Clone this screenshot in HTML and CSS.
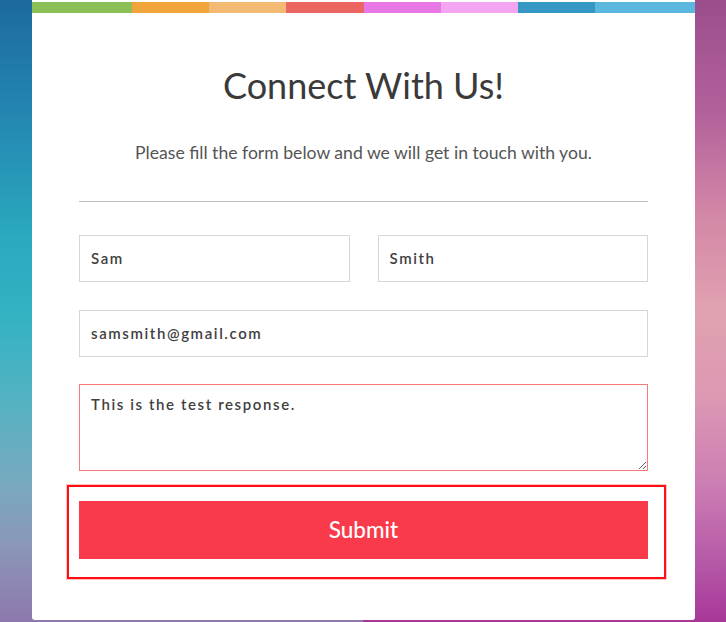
FILE: index.html
```html
<!DOCTYPE html>
<html lang="en">
<head>
<meta charset="utf-8">
<title>Connect With Us!</title>
<link rel="stylesheet" href="styles.css">
</head>
<body>
<main class="card">
  <div class="strip">
    <span class="seg seg-green"></span>
    <span class="seg seg-orange"></span>
    <span class="seg seg-sand"></span>
    <span class="seg seg-red"></span>
    <span class="seg seg-pink"></span>
    <span class="seg seg-rose"></span>
    <span class="seg seg-blue"></span>
    <span class="seg seg-sky"></span>
  </div>
  <div class="content">
    <h1 class="title">Connect With Us!</h1>
    <p class="lead">Please fill the form below and we will get in touch with you.</p>
    <hr class="divider">
    <form class="form">
      <div class="row">
        <input class="field" type="text" value="Sam">
        <input class="field" type="text" value="Smith">
      </div>
      <input class="field field-email" type="email" value="samsmith@gmail.com">
      <textarea class="field area">This is the test response.</textarea>
      <div class="highlight">
        <button class="submit" type="button">Submit</button>
      </div>
    </form>
  </div>
</main>
</body>
</html>
```

FILE: styles.css
```css
html, body {
  height: 100%;
}

body {
  margin: 0;
  overflow: hidden;
  font-family: Lato, "Open Sans", sans-serif;
  background:
    linear-gradient(to bottom, #9b4d8c 0%, #b3619b 18%, #d488a7 35%, #e0a2b0 50%, #dc98b3 64%, #cc7db3 78%, #b65aa8 90%, #a83798 100%) right top / 50% 100% no-repeat,
    linear-gradient(to bottom, #1d6a9e 0%, #2489b2 20%, #2aa9bf 38%, #36b3c3 52%, #55b2c2 65%, #79a9bf 78%, #8b96b8 88%, #8d78ad 100%) left top / 50% 100% no-repeat;
}

.card {
  width: 663px;
  margin-left: 32px;
  padding: 2px 0 41px;
  background: #ffffff;
  border-radius: 0 0 3px 3px;
}

.strip {
  display: flex;
  height: 11px;
}

.seg {
  flex: 1;
}

.seg-green { flex: 0 0 100px; background: #8bc057; }
.seg-orange { background: #f1a43a; }
.seg-sand { background: #f2ba72; }
.seg-red { background: #eb6661; }
.seg-pink { background: #e878e6; }
.seg-rose { background: #f4a5f2; }
.seg-blue { background: #3598c4; }
.seg-sky { flex: 0 0 100px; background: #5cb7df; }

.content {
  padding: 0 47px;
}

.title {
  margin: 51px 0 0;
  font-size: 36px;
  line-height: 43px;
  font-weight: 400;
  color: #3a3a3a;
  text-align: center;
}

.lead {
  margin: 36px 0 0;
  font-size: 17.6px;
  line-height: 20px;
  color: #555555;
  text-align: center;
}

.divider {
  margin: 38px 0 0;
  border: 0;
  border-top: 1px solid #bdbdbd;
  height: 0;
}

.form {
  display: flex;
  flex-direction: column;
  margin-top: 33px;
}

.row {
  display: grid;
  grid-template-columns: 1fr 1fr;
  gap: 28px;
}

.field {
  box-sizing: border-box;
  width: 100%;
  height: 47px;
  margin: 0;
  padding: 0 11px 2px;
  border: 1px solid #d6d6d6;
  border-radius: 0;
  background: #ffffff;
  font-family: Lato, "Open Sans", sans-serif;
  font-size: 15px;
  font-weight: 600;
  letter-spacing: 1.6px;
  color: #404040;
  outline: none;
}

.field-email {
  margin-top: 28px;
}

.area {
  display: block;
  height: 87px;
  margin-top: 27px;
  padding: 10px 11px;
  border-color: #f77b7b;
  line-height: 18px;
  resize: both;
}

.highlight {
  margin: 14px -18px 0 -12px;
  padding: 14px 16px 18px 10px;
  border: 2px solid #ff0f14;
  box-shadow: 0 0 0 1px rgba(255, 120, 120, 0.45);
}

.submit {
  display: block;
  width: 100%;
  height: 58px;
  margin: 0;
  padding: 0 0 1px;
  border: 0;
  background: #f93a4b;
  color: #ffffff;
  font-family: Lato, "Open Sans", sans-serif;
  font-size: 22.5px;
  font-weight: 500;
  cursor: pointer;
}
```
